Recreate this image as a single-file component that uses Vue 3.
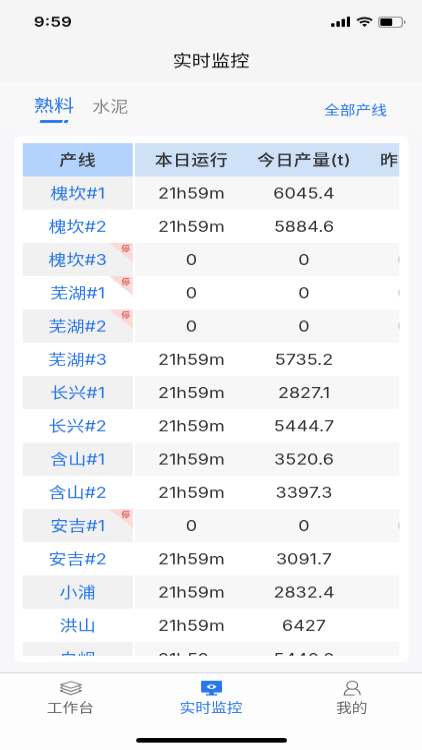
<script setup>
const names = ['槐坎#1', '槐坎#2', '槐坎#3', '芜湖#1', '芜湖#2', '芜湖#3', '长兴#1', '长兴#2', '含山#1', '含山#2', '安吉#1', '安吉#2', '小浦', '洪山', '白岘']
const output = ['6045.4', '5884.6', '0', '0', '0', '5735.2', '2827.1', '5444.7', '3520.6', '3397.3', '0', '3091.7', '2832.4', '6427', '5440.8']
const rows = names.map((name, i) => ({
  name,
  stopped: output[i] === '0',
  run: output[i] === '0' ? '0' : '21h59m',
  output: output[i],
  prev: output[i] === '0' ? '0.00' : ''
}))
</script>

<template>
  <div class="viewport">
    <div class="screen">
      <header class="status">
        <span class="clock">9:59</span>
        <div class="signals">
          <svg class="cell" viewBox="0 0 17 11"><rect x="0" y="7.2" width="3" height="3.8" rx=".7" /><rect x="4.7" y="5" width="3" height="6" rx=".7" /><rect x="9.3" y="2.6" width="3" height="8.4" rx=".7" /><rect x="14" y="0" width="3" height="11" rx=".7" /></svg>
          <svg class="wifi" viewBox="0 0 16 12"><path d="M8 2.4c2.3 0 4.4.9 6 2.3l1.3-1.4C13.3 1.5 10.8.4 8 .4S2.7 1.5.7 3.3L2 4.7c1.6-1.4 3.7-2.3 6-2.3zM8 6.2c1.3 0 2.5.5 3.4 1.2l1.4-1.4C11.5 4.9 9.8 4.2 8 4.2s-3.5.7-4.8 1.8l1.4 1.4c.9-.7 2.1-1.2 3.4-1.2zM10.2 8.7 8 11 5.8 8.7C6.4 8.2 7.2 7.9 8 7.9s1.6.3 2.2.8z" /></svg>
          <svg class="battery" viewBox="0 0 25 12"><rect x=".5" y=".5" width="21" height="11" rx="2.7" fill="none" stroke="#888" /><rect x="2" y="2" width="10.5" height="8" rx="1.3" /><path d="M23 4v4c.8-.3 1.4-1.1 1.4-2S23.8 4.3 23 4z" fill="#888" /></svg>
        </div>
      </header>
      <h1 class="title">实时监控</h1>

      <nav class="filters">
        <span class="kind active">熟料
          <svg class="mark" viewBox="0 0 26 3"><path d="M1 0H21L20 3H0zM22.5 0H26L25 3H21.5z" /></svg>
        </span>
        <span class="kind">水泥</span>
        <a class="all">全部产线</a>
      </nav>

      <main class="card">
        <div class="table">
          <div class="row head">
            <div class="cell-name">产线</div>
            <div class="values"><span>本日运行</span><span>今日产量(t)</span><span>昨日运行</span></div>
          </div>
          <div v-for="row in rows" :key="row.name" class="row">
            <div class="cell-name">{{ row.name }}<i v-if="row.stopped" class="flag"><b>停</b></i></div>
            <div class="values"><span>{{ row.run }}</span><span>{{ row.output }}</span><span class="prev">{{ row.prev }}</span></div>
          </div>
        </div>
      </main>

      <footer class="tabbar">
        <div class="tab">
          <svg viewBox="0 0 20 16" fill="none" stroke="#666" stroke-width=".9" stroke-linejoin="round"><path d="M10 .8 19.3 4.5 10 8.2.7 4.5zM3 6.7.7 7.7 10 11.5 19.3 7.7 17 6.7M3 10 .7 11 10 15 19.3 11 17 10" /></svg>
          <span>工作台</span>
        </div>
        <div class="tab current">
          <svg viewBox="0 0 20 16"><rect x=".7" y="0" width="18.6" height="12.7" rx="1" fill="#2878eb" /><path d="M8 12h4v2.5h3V16H5v-1.5h3z" fill="#2878eb" /><path d="M5.5 6.5Q10 1.5 14.5 6.5 10 11.5 5.5 6.5z" fill="#fff" /><circle cx="10" cy="6.5" r="1.6" fill="#2878eb" /></svg>
          <span>实时监控</span>
        </div>
        <div class="tab">
          <svg viewBox="0 0 20 16" fill="none" stroke="#666" stroke-width="1" stroke-linecap="round"><ellipse cx="10" cy="4.9" rx="4.8" ry="4.4" /><path d="M7.3 8.7C4.5 10 3 12.3 2.9 15.4H11.5M12.7 8.7C15.3 10 16.9 12 17.1 15.3" /></svg>
          <span>我的</span>
        </div>
        <div class="home"></div>
      </footer>
    </div>
  </div>
</template>

<style>
body { margin: 0; }
</style>

<style scoped>
* { box-sizing: border-box; }
.viewport { width: 422px; height: 750px; overflow: hidden; }
.screen { width: 375px; height: 812px; display: flex; flex-direction: column; transform: scale(1.12533, 0.92365); transform-origin: 0 0; will-change: transform; background: linear-gradient(#f9f9f9 88px, #f8f8f9 130px, #f7f7f9 150px); font-family: Inter, "Noto Sans CJK SC", sans-serif; color: #333; }
.status { height: 44px; flex: none; background: #f5f5f5; display: flex; justify-content: space-between; padding: 14px 14px 0 30px; }
.clock { font-size: 15.2px; line-height: 19px; font-weight: 600; color: #111; }
.signals { display: flex; align-items: center; height: 19px; gap: 4.5px; }
.signals svg { display: block; }
.cell { width: 17.5px; height: 11px; }
.wifi { width: 16px; height: 12px; }
.battery { width: 25px; height: 12px; }
.title { flex: none; height: 44px; margin: 0; background: #f5f5f5; text-align: center; font-size: 17px; line-height: 44px; font-weight: 400; color: #111; }
.filters { flex: none; height: 59px; display: flex; align-items: flex-start; padding: 0 31px 0 30px; }
.kind { font-size: 16px; line-height: 24px; margin-top: 15px; color: #888; }
.kind.active { position: relative; width: 36px; margin-right: 16px; font-size: 18px; color: #2878eb; }
.mark { position: absolute; left: 5px; top: 27px; width: 26px; height: 3px; fill: #2878eb; }
.all { margin-left: auto; margin-top: 18.5px; font-size: 14px; line-height: 24px; color: #2878eb; }
.card { flex: none; height: 570px; margin: 0 12.5px; padding: 8px 8px 8px 7.5px; background: #fff; border-radius: 6px; }
.table { height: 555px; overflow: hidden; }
.row { display: flex; height: 36px; gap: 2px; line-height: 36.5px; font-size: 16px; }
.cell-name { position: relative; flex: none; width: 98px; text-align: center; color: #2878eb; }
.values { flex: 1; min-width: 0; display: flex; overflow: hidden; }
.values span { flex: none; width: 100.1px; text-align: center; white-space: nowrap; }
.row:nth-child(even) .cell-name { background: #f1f1f1; }
.row:nth-child(even) .values { background: #f7f7f7; }
.head { font-weight: 500; letter-spacing: .3px; }
.head .cell-name { background: #b3d3fd; color: #333; }
.head .values { background: #cfe1f7; }
.values .prev { color: #999; padding-left: .2px; }
.flag { position: absolute; right: 0; top: 0; width: 21px; height: 21px; background: linear-gradient(45deg, transparent 50%, #fadbd8 50%); font-style: normal; }
.flag b { position: absolute; right: 2.5px; top: 2px; font-size: 7.5px; line-height: 10px; font-weight: 700; color: #dc5a52; }
.tabbar { position: relative; margin-top: auto; height: 84px; display: flex; background: #fdfdfd; border-top: 1px solid #d5d5d8; }
.tab { flex: 1; display: flex; flex-direction: column; align-items: center; padding-top: 7.5px; color: #666; }
.tab svg { width: 20px; height: 16px; }
.tab span { font-size: 14px; line-height: 20px; margin-top: 3px; }
.tab.current { color: #2878eb; }
.home { position: absolute; left: 50%; bottom: 8px; width: 134px; height: 5px; margin-left: -67px; border-radius: 3px; background: #000; }
</style>
